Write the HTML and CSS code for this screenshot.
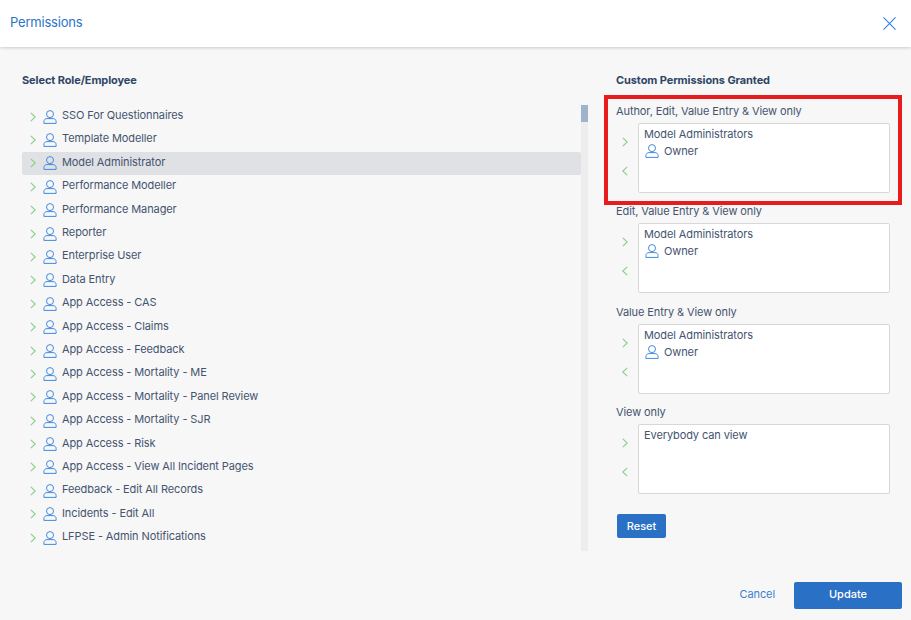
FILE: index.html
```html
<!DOCTYPE html>
<html lang="en">
<head>
    <meta charset="UTF-8">
    <title>Permissions</title>
    <link rel="stylesheet" href="styles.css">
</head>
<body>
    <svg class="defs">
        <symbol id="user" viewBox="0 0 14 14">
            <circle cx="7" cy="4.1" r="3.5"/>
            <path d="M.9 13.400v-1.800c0-1.700 1.300-3 3-3h6.200c1.700 0 3 1.300 3 3v1.800z"/>
        </symbol>
        <symbol id="right" viewBox="0 0 6 10"><path d="M.8.8 5.200 5 .8 9.200"/></symbol>
        <symbol id="left" viewBox="0 0 6 10"><path d="M5.200.8.8 5l4.400 4.200"/></symbol>
    </svg>
    <header class="top">
        <h1>Permissions</h1>
        <svg class="close" viewBox="0 0 14 14"><path d="M.5.500l13 13M13.500.500l-13 13"/></svg>
    </header>
    <main class="content">
        <section class="roles">
            <h2>Select Role/Employee</h2>
            <div class="list-wrap">
                <ul class="role-list">
                    <li><svg class="arrow"><use href="#right"/></svg><svg class="user"><use href="#user"/></svg>SSO For Questionnaires</li>
                    <li><svg class="arrow"><use href="#right"/></svg><svg class="user"><use href="#user"/></svg>Template Modeller</li>
                    <li class="selected"><svg class="arrow"><use href="#right"/></svg><svg class="user"><use href="#user"/></svg>Model Administrator</li>
                    <li><svg class="arrow"><use href="#right"/></svg><svg class="user"><use href="#user"/></svg>Performance Modeller</li>
                    <li><svg class="arrow"><use href="#right"/></svg><svg class="user"><use href="#user"/></svg>Performance Manager</li>
                    <li><svg class="arrow"><use href="#right"/></svg><svg class="user"><use href="#user"/></svg>Reporter</li>
                    <li><svg class="arrow"><use href="#right"/></svg><svg class="user"><use href="#user"/></svg>Enterprise User</li>
                    <li><svg class="arrow"><use href="#right"/></svg><svg class="user"><use href="#user"/></svg>Data Entry</li>
                    <li><svg class="arrow"><use href="#right"/></svg><svg class="user"><use href="#user"/></svg>App Access - CAS</li>
                    <li><svg class="arrow"><use href="#right"/></svg><svg class="user"><use href="#user"/></svg>App Access - Claims</li>
                    <li><svg class="arrow"><use href="#right"/></svg><svg class="user"><use href="#user"/></svg>App Access - Feedback</li>
                    <li><svg class="arrow"><use href="#right"/></svg><svg class="user"><use href="#user"/></svg>App Access - Mortality - ME</li>
                    <li><svg class="arrow"><use href="#right"/></svg><svg class="user"><use href="#user"/></svg>App Access - Mortality - Panel Review</li>
                    <li><svg class="arrow"><use href="#right"/></svg><svg class="user"><use href="#user"/></svg>App Access - Mortality - SJR</li>
                    <li><svg class="arrow"><use href="#right"/></svg><svg class="user"><use href="#user"/></svg>App Access - Risk</li>
                    <li><svg class="arrow"><use href="#right"/></svg><svg class="user"><use href="#user"/></svg>App Access - View All Incident Pages</li>
                    <li><svg class="arrow"><use href="#right"/></svg><svg class="user"><use href="#user"/></svg>Feedback - Edit All Records</li>
                    <li><svg class="arrow"><use href="#right"/></svg><svg class="user"><use href="#user"/></svg>Incidents - Edit All</li>
                    <li><svg class="arrow"><use href="#right"/></svg><svg class="user"><use href="#user"/></svg>LFPSE - Admin Notifications</li>
                </ul>
                <div class="scrollbar"><div class="thumb"></div></div>
            </div>
        </section>
        <section class="granted">
            <h2>Custom Permissions Granted</h2>
            <div class="perm highlighted">
                <h3>Author, Edit, Value Entry &amp; View only</h3>
                <div class="perm-row">
                    <div class="movers"><svg class="arrow"><use href="#right"/></svg><svg class="arrow"><use href="#left"/></svg></div>
                    <div class="perm-box">
                        <div>Model Administrators</div>
                        <div class="owner"><svg class="user"><use href="#user"/></svg>Owner</div>
                    </div>
                </div>
            </div>
            <div class="perm">
                <h3>Edit, Value Entry &amp; View only</h3>
                <div class="perm-row">
                    <div class="movers"><svg class="arrow"><use href="#right"/></svg><svg class="arrow"><use href="#left"/></svg></div>
                    <div class="perm-box">
                        <div>Model Administrators</div>
                        <div class="owner"><svg class="user"><use href="#user"/></svg>Owner</div>
                    </div>
                </div>
            </div>
            <div class="perm">
                <h3>Value Entry &amp; View only</h3>
                <div class="perm-row">
                    <div class="movers"><svg class="arrow"><use href="#right"/></svg><svg class="arrow"><use href="#left"/></svg></div>
                    <div class="perm-box">
                        <div>Model Administrators</div>
                        <div class="owner"><svg class="user"><use href="#user"/></svg>Owner</div>
                    </div>
                </div>
            </div>
            <div class="perm">
                <h3>View only</h3>
                <div class="perm-row">
                    <div class="movers"><svg class="arrow"><use href="#right"/></svg><svg class="arrow"><use href="#left"/></svg></div>
                    <div class="perm-box">
                        <div>Everybody can view</div>
                    </div>
                </div>
            </div>
            <button class="reset" type="button">Reset</button>
        </section>
    </main>
    <footer class="actions">
        <a class="cancel" href="#">Cancel</a>
        <button class="update" type="button">Update</button>
    </footer>
</body>
</html>
```
FILE: styles.css
```css
* {
    box-sizing: border-box;
}
html, body {
    height: 620px;
    overflow: hidden;
}
body {
    margin: 0;
    font-family: Inter, "Liberation Sans", sans-serif;
    font-size: 11px;
    letter-spacing: -0.1px;
    color: #44546f;
    background-color: #f7f7f7;
}
.defs {
    display: none;
}
.top {
    height: 47px;
    display: flex;
    align-items: center;
    justify-content: space-between;
    padding: 0 15px 4px 10px;
    background: #fff;
    box-shadow: 0 1px 3px rgba(0,0,0,0.18);
}
.top h1 {
    margin: 0;
    font-size: 13px;
    letter-spacing: -0.2px;
    font-weight: 400;
    color: #2a74c9;
}
.close {
    width: 13px;
    height: 13px;
    margin-top: 4px;
    fill: none;
    stroke: #2a7de1;
    stroke-width: 1.1;
}
.content {
    display: flex;
    height: 515px;
}
h2 {
    margin: 0;
    font-size: 11px;
    line-height: 14px;
    font-weight: 700;
    color: #2f4666;
}
.roles {
    width: 589px;
    padding: 26px 0 0 22px;
}
.list-wrap {
    display: flex;
    height: 446px;
    margin-top: 18px;
}
.role-list {
    list-style: none;
    margin: -0.1px 0 0;
    padding: 0;
    width: 559px;
    overflow: hidden;
}
.role-list li {
    display: flex;
    align-items: center;
    height: 23.4px;
    padding: 0 0 3px 8px;
}
.role-list .arrow {
    margin-top: 3px;
}
.role-list .selected {
    background: #e0e1e5;
    border-radius: 2px;
}
.arrow {
    width: 6px;
    height: 10px;
    fill: none;
    stroke: #86cf86;
    stroke-width: 1.1;
    flex: none;
}
.user {
    width: 14px;
    height: 14px;
    fill: none;
    stroke: #3f8ae0;
    stroke-width: 1;
    flex: none;
}
.role-list .user {
    margin: 3px 5px 0 7px;
}
.scrollbar {
    width: 7px;
    background: #ededed;
}
.thumb {
    height: 17px;
    background: #9fb3cc;
}
.granted {
    flex: 1;
    padding: 26px 0 0 27px;
    position: relative;
}
.granted h2 {
    margin-bottom: 7px;
}
.perm {
    height: 100.4px;
    padding-top: 10px;
}
.perm h3 {
    margin: 0;
    font-size: 11px;
    line-height: 14px;
    font-weight: 400;
}
.perm-row {
    display: flex;
    margin-top: 5px;
}
.movers {
    width: 22px;
    height: 70px;
    display: flex;
    flex-direction: column;
    align-items: center;
    gap: 19px;
    padding: 14px 4px 0 0;
}
.perm-box {
    width: 252px;
    height: 70px;
    background: #fff;
    border: 1px solid #d8d8d8;
    border-radius: 2px;
    padding: 3px 5px;
    line-height: 14px;
}
.owner {
    display: flex;
    align-items: center;
    margin-top: 3px;
    padding-left: 1px;
}
.owner .user {
    margin-right: 5px;
}
.highlighted::after {
    content: "";
    box-sizing: border-box;
    position: absolute;
    left: 15px;
    top: 48px;
    width: 298px;
    height: 110px;
    border: 4px solid #e81c1c;
    pointer-events: none;
}
.reset {
    display: block;
    margin: 18px 0 0 1px;
    width: 49px;
    height: 24px;
    background: #2a70c4;
    color: #fff;
    border: none;
    border-radius: 2px;
    font: 500 11px Inter, "Liberation Sans", sans-serif;
}
.actions {
    display: flex;
    justify-content: flex-end;
    align-items: center;
    gap: 19px;
    height: 58px;
    padding: 20px 9px 11px 0;
}
.cancel {
    color: #3b7fd1;
    text-decoration: none;
    margin-bottom: 3px;
}
.update {
    width: 108px;
    height: 27px;
    padding-bottom: 5px;
    background: #2a70c4;
    color: #fff;
    border: none;
    border-radius: 2px;
    font: 500 11px Inter, "Liberation Sans", sans-serif;
}
```
